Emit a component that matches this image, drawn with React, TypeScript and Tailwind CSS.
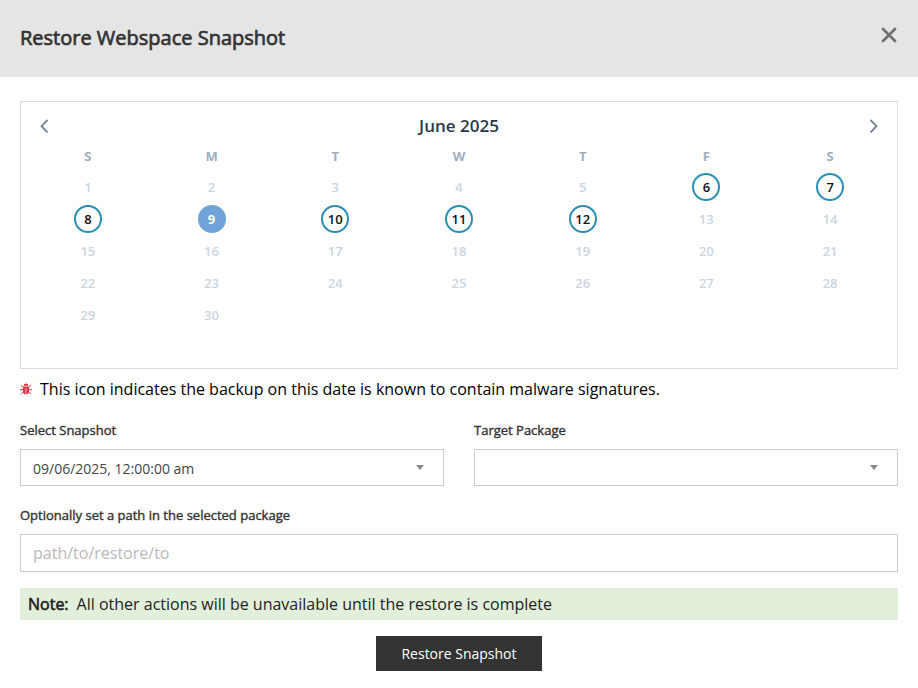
import { useState } from "react";

const weekdays = ["S", "M", "T", "W", "T", "F", "S"];
const available = [6, 7, 8, 9, 10, 11, 12];
const weeks = [0, 1, 2, 3, 4, 5].map((w) =>
  weekdays.map((_, d) => {
    const day = w * 7 + d + 1;
    return day <= 30 ? day : null;
  })
);

function BugIcon() {
  return (
    <svg className="h-3 w-3 shrink-0 text-[#d9364a]" viewBox="0 0 12 12" fill="currentColor" aria-hidden="true">
      <path d="M3.700 2.800a2.300 2.300 0 0 1 4.600 0z" />
      <path d="M3 3.400h6v5.200a3 3 0 0 1-2.700 3V5.200h-.6v6.400A3 3 0 0 1 3 8.600z" />
      <path
        d="M3.200 4.400 1.300 2.500M8.800 4.400l1.900-1.900M3 6.700H.2M9 6.700h2.800M3.300 9 1.400 10.900M8.700 9l1.900 1.900"
        fill="none"
        stroke="currentColor"
        strokeWidth="1"
        strokeLinecap="round"
      />
    </svg>
  );
}

function Calendar() {
  const [selected, setSelected] = useState(9);
  return (
    <section className="border border-[#dcdcdc] px-[5px] pb-[5px]">
      <div className="flex h-[43px] items-center justify-between px-[7px] pt-[5px]">
        <button type="button" aria-label="Previous month" className="p-1 pb-[7px] text-[#718096]">
          <svg className="h-4 w-4" viewBox="0 0 16 16" fill="none" stroke="currentColor" strokeWidth="1.8">
            <path d="M10.500 3 L4.500 9.200 L10.500 15.400" />
          </svg>
        </button>
        <h2 className="text-[17px] font-semibold leading-6 text-[#2d3748]">June 2025</h2>
        <button type="button" aria-label="Next month" className="p-1 pb-[7px] text-[#718096]">
          <svg className="h-4 w-4" viewBox="0 0 16 16" fill="none" stroke="currentColor" strokeWidth="1.8">
            <path d="M5.500 3 L11.500 9.200 L5.500 15.400" />
          </svg>
        </button>
      </div>
      <table className="w-full table-fixed border-collapse text-center">
        <thead>
          <tr>
            {weekdays.map((d, i) => (
              <th key={i} className="h-[26px] p-0 pb-1 text-[13px] font-bold leading-4 text-[#a0aec0]">{d}</th>
            ))}
          </tr>
        </thead>
        <tbody>
          {weeks.map((week, w) => (
            <tr key={w}>
              {week.map((day, d) => (
                <td key={d} className="h-8 p-0">
                  {day && (
                    <button
                      type="button"
                      disabled={!available.includes(day)}
                      onClick={() => setSelected(day)}
                      className={
                        "mx-auto flex h-7 w-7 items-center justify-center rounded-full text-[13px] leading-5 " +
                        (day === selected
                          ? "bg-[#6fa3d8] font-bold text-white"
                          : available.includes(day)
                            ? "border-2 border-[#2a8fb8] font-semibold text-[#111111]"
                            : "font-semibold text-[#cbd5e0]")
                      }
                    >
                      {day}
                    </button>
                  )}
                </td>
              ))}
            </tr>
          ))}
        </tbody>
      </table>
    </section>
  );
}

const labelClass =
  "block text-[13px] leading-5 text-[#333333] [-webkit-text-stroke:0.4px_currentColor]";

function SelectField({ id, label, options }: { id: string; label: string; options: string[] }) {
  return (
    <div>
      <label htmlFor={id} className={labelClass}>{label}</label>
      <div className="relative mt-[9px]">
        <select
          id={id}
          className="h-[37px] w-full appearance-none rounded-none border border-[#cccccc] bg-white px-3 pt-0.5 text-sm text-[#444444]"
        >
          {options.map((o) => (
            <option key={o}>{o}</option>
          ))}
        </select>
        <span className="pointer-events-none absolute inset-y-0 right-5 flex items-center">
          <svg className="h-[5px] w-2" viewBox="0 0 8 5" fill="#888888">
            <path d="M0 0h8L4 5z" />
          </svg>
        </span>
      </div>
    </div>
  );
}

export default function App() {
  return (
    <div className="min-h-screen bg-white font-['Open_Sans','Noto_Sans',sans-serif]">
      <header className="flex h-[77px] items-center justify-between bg-[#e5e5e5] px-5">
        <h1 className="pb-0.5 text-xl leading-7 text-[#333333] [-webkit-text-stroke:0.7px_currentColor]">
          Restore Webspace Snapshot
        </h1>
        <button type="button" aria-label="Close" className="-mr-px pb-[7px] text-[#707070]">
          <svg className="h-5 w-5" viewBox="0 0 20 20" fill="none" stroke="currentColor" strokeWidth="2.8" strokeLinecap="round">
            <path d="M4 4 L16 16 M16 4 L4 16" />
          </svg>
        </button>
      </header>
      <main className="px-5 pt-6">
        <Calendar />
        <p className="flex items-center gap-2 pt-2 text-base leading-6 text-black">
          <BugIcon />
          This icon indicates the backup on this date is known to contain malware signatures.
        </p>
        <form onSubmit={(e) => e.preventDefault()}>
          <div className="mt-[19px] grid grid-cols-2 gap-[30px]">
            <SelectField id="snapshot" label="Select Snapshot" options={["09/06/2025, 12:00:00 am"]} />
            <SelectField id="package" label="Target Package" options={[""]} />
          </div>
          <label htmlFor="path" className={labelClass + " mt-[19px]"}>
            Optionally set a path in the selected package
          </label>
          <input
            id="path"
            type="text"
            placeholder="path/to/restore/to"
            className="mt-[9px] block h-[38px] w-full border border-[#cccccc] bg-white px-3 text-base text-[#444444] placeholder:text-[#b8b8b8]"
          />
          <p className="mt-4 bg-[#e2efda] px-2 py-1 text-base leading-6 text-[#222222]">
            <strong className="mr-2 font-normal [-webkit-text-stroke:0.6px_currentColor]">Note:</strong>
            All other actions will be unavailable until the restore is complete
          </p>
          <button type="submit" className="mx-auto mt-4 block h-[35px] bg-[#333333] px-[25px] text-sm text-white">
            Restore Snapshot
          </button>
        </form>
      </main>
    </div>
  );
}
